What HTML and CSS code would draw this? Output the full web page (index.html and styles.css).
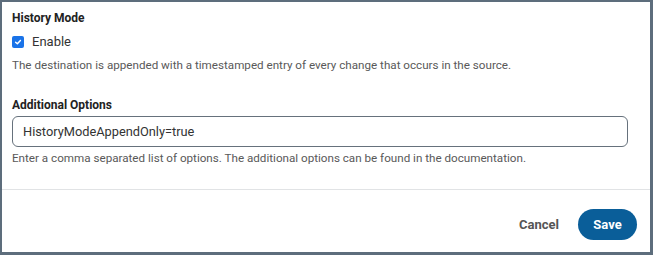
FILE: index.html
```html
<!DOCTYPE html>
<html lang="en">
<head>
    <meta charset="UTF-8">
    <meta name="viewport" content="width=device-width, initial-scale=1.0">
    <title>History Mode</title>
    <link rel="stylesheet" href="styles.css">
</head>
<body>
    <div class="dialog">
        <div class="dialog-body">
            <div class="section">
                <h3 class="section-title">History Mode</h3>
                <label class="checkbox">
                    <span class="checkbox-box">
                        <svg width="8" height="8" viewBox="0 0 10 10"><path d="M2 5.2 L4.2 7.3 L8 3" fill="none" stroke="#fff" stroke-width="1.8" stroke-linecap="round" stroke-linejoin="round"/></svg>
                    </span>
                    <span>Enable</span>
                </label>
                <p class="hint">The destination is appended with a timestamped entry of every change that occurs in the source.</p>
            </div>
            <div class="section">
                <label class="section-title" for="options">Additional Options</label>
                <input type="text" id="options" class="text-input" value="HistoryModeAppendOnly=true">
                <p class="hint">Enter a comma separated list of options. The additional options can be found in the documentation.</p>
            </div>
        </div>
        <div class="dialog-footer">
            <button class="btn btn-link">Cancel</button>
            <button class="btn btn-primary">Save</button>
        </div>
    </div>
</body>
</html>
```

FILE: styles.css
```css
* {
    margin: 0;
    padding: 0;
    box-sizing: border-box;
}

body {
    font-family: Roboto, "Liberation Sans", Arial, sans-serif;
    background: #5d6d7c;
    height: 255px;
    padding: 2px 3px 3px 2px;
    overflow: hidden;
}

.dialog {
    background: white;
    height: 100%;
    display: flex;
    flex-direction: column;
}

.dialog-body {
    padding: 9px 22px 0 10px;
    height: 188px;
    border-bottom: 1px solid #e1e3e5;
}

.section-title {
    display: block;
    font-size: 12px;
    font-weight: bold;
    color: #222;
    line-height: 14px;
}

.checkbox {
    display: flex;
    align-items: center;
    gap: 8px;
    margin-top: 9px;
    font-size: 13px;
    color: #333;
    line-height: 16px;
}

.checkbox-box {
    width: 12px;
    height: 12px;
    border-radius: 2px;
    background: #1a73e8;
    display: flex;
    align-items: center;
    justify-content: center;
}

.hint {
    font-size: 11.65px;
    color: #595959;
    line-height: 14px;
    margin-top: 8px;
}

.section + .section {
    margin-top: 26px;
}

.text-input {
    display: block;
    width: 100%;
    height: 31px;
    margin-top: 4px;
    padding: 0 10px;
    border: 1px solid #66717c;
    border-radius: 6px;
    font-family: inherit;
    font-size: 12.8px;
    color: #333;
    outline: none;
}

.section .text-input + .hint {
    margin-top: 4px;
}

.dialog-footer {
    flex: 1;
    display: flex;
    justify-content: flex-end;
    align-items: flex-start;
    gap: 19px;
    padding: 19px 13px 0 0;
}

.btn {
    border: none;
    cursor: pointer;
    font-family: inherit;
    font-size: 13px;
    font-weight: bold;
}

.btn-link {
    background: none;
    color: #555;
    padding: 0;
    height: 31px;
}

.btn-primary {
    background: #0a5e99;
    color: white;
    width: 59px;
    height: 31px;
    border-radius: 16px;
}
```
